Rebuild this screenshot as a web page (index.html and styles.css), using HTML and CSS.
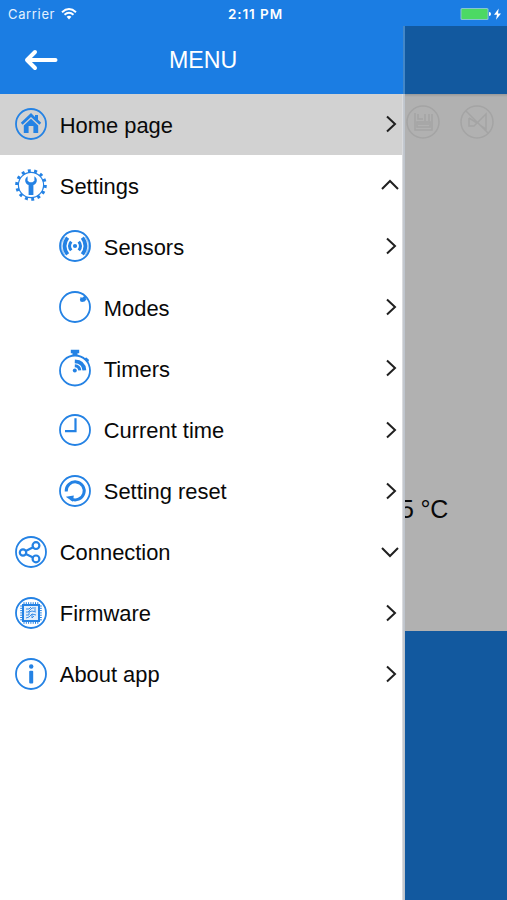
FILE: index.html
```html
<!DOCTYPE html>
<html lang="en">
<head>
<meta charset="utf-8">
<title>Menu</title>
<link rel="stylesheet" href="styles.css">
</head>
<body>
<div class="screen">
  <header class="status">
    <div class="status-left"><span>Carrier</span>
      <svg width="16" height="12" viewBox="0 0 16 12" fill="none" stroke="#fff" stroke-width="1.9"><path d="M1 4.2Q8-2.2 15 4.2M3.5 6.8Q8 2.7 12.5 6.8"/><path d="M5.6 8.8Q8 6.8 10.4 8.8L8 11.4Z" fill="#fff" stroke="none"/></svg>
    </div>
    <span class="clock">2:11 PM</span>
    <svg class="battery" width="42" height="14" viewBox="0 0 42 14"><rect x=".5" y="1" width="28" height="12" rx="1.5" fill="#86c5d2"/><rect x="1.5" y="2" width="26" height="10" rx="1" fill="#4cd964"/><path d="M29 5q2 .2 2 2t-2 2z" fill="#fff"/><path d="M38.7 1.5 34 7.7h3l-1 5 5-6.3h-3z" fill="#fff"/></svg>
  </header>
  <div class="body">
    <aside class="drawer">
      <div class="title">
        <svg class="back" width="34" height="22" viewBox="0 0 34 22" fill="none" stroke="#fff" stroke-width="4" stroke-linecap="round" stroke-linejoin="round"><path d="M31.5 11H3M11 3 3 11l8 8"/></svg>
        <h1>MENU</h1>
      </div>
      <nav>
        <a class="row active"><svg class="icon" viewBox="0 0 32 32"><circle cx="16" cy="16" r="15"/><path class="solid" d="M16 5 5.8 14.7l1.8 2L16 8.9l8.4 7.8 1.8-2-3.2-3V7h-3v2z"/><path class="solid" d="M16 10.8 8.8 17.4V25h4.8v-7h4.8v7h4.8v-7.6z"/></svg><span>Home page</span><svg class="chev" viewBox="0 0 20 20"><path d="m7 2.5 8 7.5-8 7.5"/></svg></a>
        <a class="row"><svg class="icon" viewBox="0 0 32 32"><circle class="w1" cx="16" cy="16" r="12.6"/><circle class="teeth" cx="16" cy="16" r="14.2" pathLength="14"/><path class="solid" d="M12.6 7.2v4.6l2 1.5h2.8l2-1.5V7.2c1.6 1 2.6 2.7 2.4 4.8-.2 1.9-1.5 3.3-3.4 4.1V26h-4.8v-9.9c-1.9-.8-3.2-2.2-3.4-4.1-.2-2.1.8-3.8 2.4-4.8z"/></svg><span>Settings</span><svg class="chev" viewBox="0 0 20 20"><path d="M2 14 10 6l8 8"/></svg></a>
        <a class="row sub"><svg class="icon" viewBox="0 0 32 32"><circle cx="16" cy="16" r="15"/><circle class="solid" cx="16" cy="16" r="2.1"/><path class="w3" d="M12.2 11.6q-3.4 4.4 0 8.8M19.8 11.6q3.4 4.4 0 8.8"/><path class="w4" d="M8.6 7.6q-6.2 8.4 0 16.8M23.4 7.6q6.2 8.4 0 16.8"/><path d="M5.4 6.8q-6.6 9.2 0 18.4M26.6 6.8q6.6 9.2 0 18.4" opacity=".45"/></svg><span>Sensors</span><svg class="chev" viewBox="0 0 20 20"><path d="m7 2.5 8 7.5-8 7.5"/></svg></a>
        <a class="row sub"><svg class="icon" viewBox="0 0 32 32"><circle cx="16" cy="16" r="15"/><path class="w3" d="m23.4 9.4 3-3.6"/><path class="solid" d="m20.8 6.2 7 2-2.6 2.6z"/><circle class="solid" cx="23.2" cy="8.8" r="2.3"/></svg><span>Modes</span><svg class="chev" viewBox="0 0 20 20"><path d="m7 2.5 8 7.5-8 7.5"/></svg></a>
        <a class="row sub"><svg class="icon" viewBox="0 0 32 32"><circle cx="16" cy="18.5" r="15"/><path class="solid" d="M11.8-2.3h8.4v3.6h-1.7v2.6h-5V1.3h-1.7zM24.8 6.5l2.6-1.1 2.7 2.6-1.2 2.6z"/><circle class="solid" cx="15.8" cy="18.4" r="2"/><path class="w3" d="M15.8 13.7q4.6.2 5 4.7"/><path class="w4" d="M15.8 9.4q9 .3 9.6 9"/></svg><span>Timers</span><svg class="chev" viewBox="0 0 20 20"><path d="m7 2.5 8 7.5-8 7.5"/></svg></a>
        <a class="row sub"><svg class="icon" viewBox="0 0 32 32"><circle cx="16" cy="16" r="15"/><path class="w2" d="M16.5 4.3v12.8H6"/></svg><span>Current time</span><svg class="chev" viewBox="0 0 20 20"><path d="m7 2.5 8 7.5-8 7.5"/></svg></a>
        <a class="row sub"><svg class="icon" viewBox="0 0 32 32"><circle cx="16" cy="16" r="15"/><path class="w3" d="M7.2 16.5a9 9 0 1 1 4.7 7.3"/><path class="solid" d="m6.8 21.7 8-1.2-.9 6.3z"/></svg><span>Setting reset</span><svg class="chev" viewBox="0 0 20 20"><path d="m7 2.5 8 7.5-8 7.5"/></svg></a>
        <a class="row"><svg class="icon" viewBox="0 0 32 32"><circle cx="16" cy="16" r="15"/><g class="w2"><circle cx="8" cy="16.5" r="3.2"/><circle cx="21" cy="9.6" r="3.4"/><circle cx="21" cy="22.9" r="3.4"/><path d="m10.8 15.1 7.3-3.8M10.8 17.9l7.3 3.5"/></g></svg><span>Connection</span><svg class="chev" viewBox="0 0 20 20"><path d="m2 6 8 8 8-8"/></svg></a>
        <a class="row"><svg class="icon" viewBox="0 0 32 32"><circle cx="16" cy="16" r="15"/><path class="pins" d="M9 5.2v21.6M11.3 5.2v21.6M13.6 5.2v21.6M15.9 5.2v21.6M18.2 5.2v21.6M20.5 5.2v21.6M22.8 5.2v21.6M5.2 9h21.6M5.2 11.3h21.6M5.2 13.6h21.6M5.2 15.9h21.6M5.2 18.2h21.6M5.2 20.5h21.6M5.2 22.8h21.6"/><rect class="chip" x="8" y="8" width="16" height="16"/><path class="trace" d="M11 12h3l2-2M11 15h2l4-4h4M11 18h3v-3l3-1 4 1M11 21l3-1 3-3 4 1M17 21l2-2M20 12v2M17 17v4"/></svg><span>Firmware</span><svg class="chev" viewBox="0 0 20 20"><path d="m7 2.5 8 7.5-8 7.5"/></svg></a>
        <a class="row"><svg class="icon" viewBox="0 0 32 32"><circle cx="16" cy="16" r="15"/><circle class="solid" cx="16.2" cy="8.5" r="2.2"/><rect class="solid" x="14.2" y="12.8" width="4" height="12.8" rx="1"/></svg><span>About app</span><svg class="chev" viewBox="0 0 20 20"><path d="m7 2.5 8 7.5-8 7.5"/></svg></a>
      </nav>
    </aside>
    <main class="page">
      <div class="page-head"></div>
      <div class="page-body">
        <div class="tools">
          <svg viewBox="0 0 36 36"><circle cx="18" cy="18" r="16"/><path d="M10 9v17h17V10M13 10v5h5M20 10v7M24 10v7M12 18h13v5H12zM13 20h11"/></svg>
          <svg viewBox="0 0 36 36"><circle cx="18" cy="18" r="16"/><path d="M7 7l22 22M10 14l8 5 9-9v15l-6-4M10 14v8h5l3-3"/></svg>
        </div>
        <div class="temp">5 °C</div>
      </div>
      <div class="page-foot"></div>
    </main>
  </div>
</div>
</body>
</html>
```
FILE: styles.css
```css
* { box-sizing: border-box; }
body { margin: 0; font-family: "Liberation Sans", Arial, sans-serif; color: #090909; }
.screen { width: 507px; height: 900px; overflow: hidden; display: flex; flex-direction: column; background: #1b7de3; }
.status { height: 26px; flex: none; display: grid; grid-template-columns: 1fr auto 1fr; align-items: center; padding: 1px 5px 0 8px; color: #fff; font-family: Inter, sans-serif; font-size: 13px; }
.status-left { display: flex; align-items: center; gap: 6px; letter-spacing: .65px; color: #e4f1ff; }
.clock { font-weight: 600; letter-spacing: .9px; font-size: 13.5px; padding-left: 1px; }
.battery { justify-self: end; }
.body { flex: 1; display: flex; min-height: 0; }
.drawer { width: 405px; flex: none; background: linear-gradient(to right, #fff 402px, #b4b8bf 403px, #d4d8dd 404px, #a9b2bd 405px); }
.title { height: 68px; display: flex; align-items: center; background: #1b7de3; border-right: 2px solid #4387c8; padding-left: 24px; }
.title h1 { margin: 1px 0 0 111px; font-size: 23.2px; font-weight: 400; color: #fff; }
.row { height: 61.1px; display: flex; align-items: center; padding: 0 4px 0 15px; margin-right: 3px; font-size: 21.9px; }
.row span { flex: 1; margin: 2px 0 0 12.8px; white-space: nowrap; }
.sub { padding-left: 59px; }
.active { background: #d2d2d2; }
.icon { width: 32px; height: 32px; margin-top: -1px; flex: none; overflow: visible; fill: none; stroke: #2482e4; stroke-width: 1.8; }
.icon .solid { fill: #2482e4; stroke: none; }
.icon .w1 { stroke-width: 1.2; }
.icon .w2 { stroke-width: 2.2; }
.icon .w3 { stroke-width: 3; }
.icon .w4 { stroke-width: 3.8; }
.icon .teeth { stroke-width: 3.2; stroke-dasharray: .46 .54; }
.icon .pins { stroke-width: 1; }
.icon .chip { fill: #e2effc; stroke-width: 2; }
.icon .trace { stroke-width: .9; }
.chev { width: 20px; height: 20px; margin: -1px -2px 0 0; fill: none; stroke: #202020; stroke-width: 2; }
.page { flex: 1; display: flex; flex-direction: column; min-width: 0; }
.page-head { height: 68px; background: #12599f; }
.page-body { height: 537px; background: linear-gradient(#999 0, #b1b1b1 3px); }
.tools { display: flex; gap: 18px; padding-top: 10px; }
.tools svg { width: 36px; height: 36px; flex: none; fill: none; stroke: #a4a4a4; stroke-width: 1.5; }
.temp { height: 34px; margin-top: 352px; margin-left: -5px; font-size: 25px; line-height: 34px; letter-spacing: -.2px; clip-path: inset(0 0 0 5px); }
.page-foot { flex: 1; background: #12599f; }
```
